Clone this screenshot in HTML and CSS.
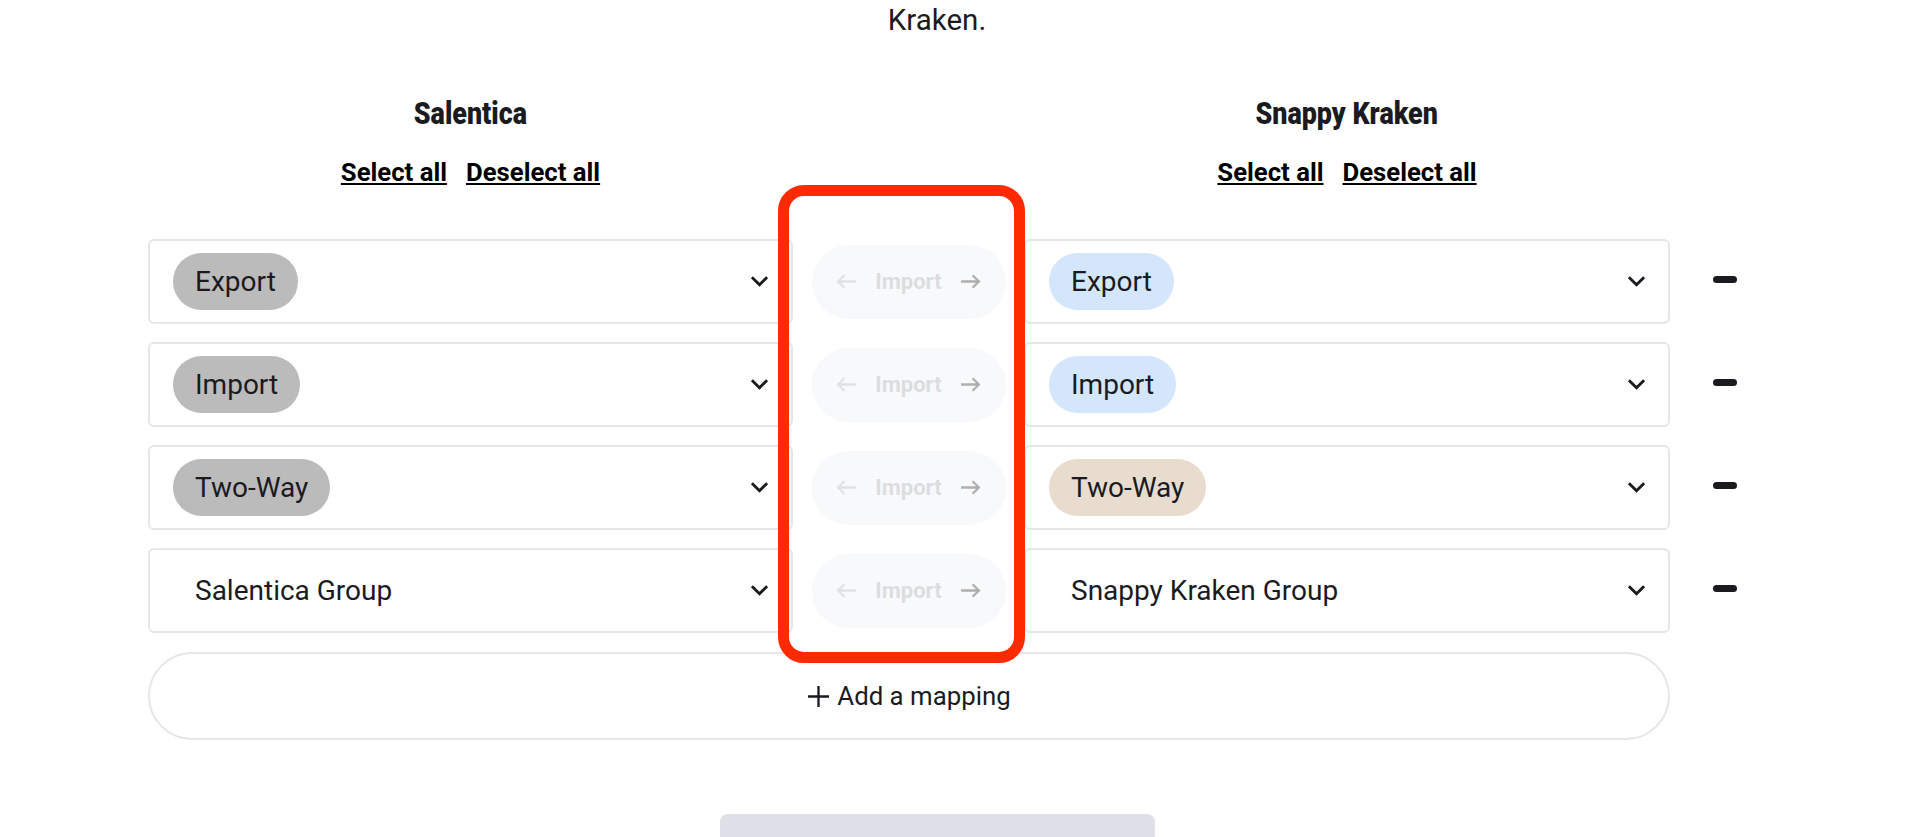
FILE: index.html
```html
<!DOCTYPE html>
<html lang="en">
<head>
  <meta charset="UTF-8" />
  <meta name="viewport" content="width=device-width, initial-scale=1.0"/>
  <title>Field mapping</title>
  <link rel="stylesheet" href="styles.css">
</head>
<body>
  <div class="page">
    <p class="intro">Kraken.</p>

    <div class="mapping">
      <div class="heads">
        <div class="head">
          <h2><span>Salentica</span></h2>
          <div class="links"><a href="#">Select all</a><a href="#">Deselect all</a></div>
        </div>
        <div class="head">
          <h2><span>Snappy Kraken</span></h2>
          <div class="links"><a href="#">Select all</a><a href="#">Deselect all</a></div>
        </div>
      </div>

      <div class="row">
        <div class="select"><span class="chip grey">Export</span><svg class="chev" viewBox="0 0 20 12"><path d="M2 2l8 8 8-8"/></svg></div>
        <div class="mid"><div class="sync"><svg class="arrow back" viewBox="0 0 20 16"><path d="M19 8H2M8 2L2 8l6 6"/></svg><span>Import</span><svg class="arrow" viewBox="0 0 20 16"><path d="M1 8h17M12 2l6 6-6 6"/></svg></div></div>
        <div class="select"><span class="chip blue">Export</span><svg class="chev" viewBox="0 0 20 12"><path d="M2 2l8 8 8-8"/></svg></div>
        <div class="remove"><i></i></div>
      </div>

      <div class="row">
        <div class="select"><span class="chip grey">Import</span><svg class="chev" viewBox="0 0 20 12"><path d="M2 2l8 8 8-8"/></svg></div>
        <div class="mid"><div class="sync"><svg class="arrow back" viewBox="0 0 20 16"><path d="M19 8H2M8 2L2 8l6 6"/></svg><span>Import</span><svg class="arrow" viewBox="0 0 20 16"><path d="M1 8h17M12 2l6 6-6 6"/></svg></div></div>
        <div class="select"><span class="chip blue">Import</span><svg class="chev" viewBox="0 0 20 12"><path d="M2 2l8 8 8-8"/></svg></div>
        <div class="remove"><i></i></div>
      </div>

      <div class="row">
        <div class="select"><span class="chip grey">Two-Way</span><svg class="chev" viewBox="0 0 20 12"><path d="M2 2l8 8 8-8"/></svg></div>
        <div class="mid"><div class="sync"><svg class="arrow back" viewBox="0 0 20 16"><path d="M19 8H2M8 2L2 8l6 6"/></svg><span>Import</span><svg class="arrow" viewBox="0 0 20 16"><path d="M1 8h17M12 2l6 6-6 6"/></svg></div></div>
        <div class="select"><span class="chip tan">Two-Way</span><svg class="chev" viewBox="0 0 20 12"><path d="M2 2l8 8 8-8"/></svg></div>
        <div class="remove"><i></i></div>
      </div>

      <div class="row">
        <div class="select"><span class="plain">Salentica Group</span><svg class="chev" viewBox="0 0 20 12"><path d="M2 2l8 8 8-8"/></svg></div>
        <div class="mid"><div class="sync"><svg class="arrow back" viewBox="0 0 20 16"><path d="M19 8H2M8 2L2 8l6 6"/></svg><span>Import</span><svg class="arrow" viewBox="0 0 20 16"><path d="M1 8h17M12 2l6 6-6 6"/></svg></div></div>
        <div class="select"><span class="plain">Snappy Kraken Group</span><svg class="chev" viewBox="0 0 20 12"><path d="M2 2l8 8 8-8"/></svg></div>
        <div class="remove"><i></i></div>
      </div>

      <button class="add"><svg viewBox="0 0 24 24"><path d="M12 1v22M1 12h22"/></svg>Add a mapping</button>

      <div class="callout"></div>
    </div>

    <div class="save-wrap"><div class="save"></div></div>
  </div>
</body>
</html>
```

FILE: styles.css
```css
* {
  box-sizing: border-box;
}

html, body {
  height: 837px;
  overflow: hidden;
}

body {
  margin: 0;
  background-color: #ffffff;
  color: #1b1b1f;
  font-family: Roboto, sans-serif;
}

.page {
  width: 1590px;
  margin-left: 148px;
}

.intro {
  width: 1578px;
  margin: 0;
  padding-top: 3px;
  height: 90px;
  font-size: 29.5px;
  line-height: 34px;
  text-align: center;
}

.mapping {
  position: relative;
  width: 1522px;
}

.heads {
  display: grid;
  grid-template-columns: 645px 646px;
  column-gap: 231px;
  height: 149px;
}

.head {
  text-align: center;
}

.head h2 {
  margin: 0;
  padding-top: 5px;
  height: 65px;
  font-size: 32px;
  line-height: 36px;
  font-weight: 900;
}

/* no condensed family here, so squeeze the heading */
.head h2 span {
  display: inline-block;
  transform: scaleX(0.84);
}

.links {
  display: flex;
  justify-content: center;
  gap: 19px;
  font-size: 25.7px;
  line-height: 34px;
  font-weight: 700;
}

.links a {
  color: #000000;
}

.row {
  display: grid;
  grid-template-columns: 645px 231px 646px 68px;
  height: 85px;
  margin-bottom: 18px;
  width: 1590px;
}

.select {
  display: flex;
  align-items: center;
  justify-content: space-between;
  padding: 0 22px 0 23px;
  border: 2px solid #e6e6e6;
  border-radius: 6px;
  font-size: 28px;
}

.chip {
  height: 57px;
  line-height: 57px;
  padding: 0 22px;
  border-radius: 29px;
}

.grey {
  background-color: #bbbbbb;
}

.blue {
  background-color: #d3e6fb;
}

.tan {
  background-color: #e8dccf;
}

.plain {
  padding-left: 22px;
}

.chev {
  width: 19px;
  height: 12px;
  margin-bottom: 1px;
  fill: none;
  stroke: #1b1b1f;
  stroke-width: 3;
}

.mid {
  display: flex;
  align-items: center;
  justify-content: center;
}

.sync {
  display: flex;
  align-items: center;
  justify-content: center;
  gap: 18px;
  width: 194px;
  height: 74px;
  border-radius: 37px;
  background-color: #f8f9fa;
  color: #dcdde0;
  font-size: 22px;
  font-weight: 700;
}

.arrow {
  width: 21px;
  height: 17px;
  fill: none;
  stroke: #aeaeae;
  stroke-width: 2.2;
}

.arrow.back {
  stroke: #e0e1e3;
}

.remove {
  display: flex;
  align-items: center;
  justify-content: flex-end;
  padding-right: 1px;
}

.remove i {
  display: block;
  width: 24px;
  height: 7px;
  margin-bottom: 4px;
  border-radius: 3.5px;
  background-color: #1b1b1f;
}

.add {
  display: flex;
  align-items: center;
  justify-content: center;
  gap: 7px;
  width: 100%;
  height: 88px;
  margin-top: 19px;
  border: 2px solid #e6e6e6;
  border-radius: 44px;
  background-color: #ffffff;
  color: #1b1b1f;
  font-family: Roboto, sans-serif;
  font-size: 25.8px;
}

.add svg {
  width: 23px;
  height: 23px;
  fill: none;
  stroke: #1b1b1f;
  stroke-width: 2.4;
}

.callout {
  position: absolute;
  left: 630px;
  top: 95px;
  width: 247px;
  height: 478px;
  border: 11px solid #ff2a00;
  border-radius: 26px;
}

.save-wrap {
  width: 1578px;
  padding-top: 74px;
  display: flex;
  justify-content: center;
}

.save {
  width: 435px;
  height: 60px;
  border-radius: 8px 8px 0 0;
  background-color: #dfe0e8;
}
```
